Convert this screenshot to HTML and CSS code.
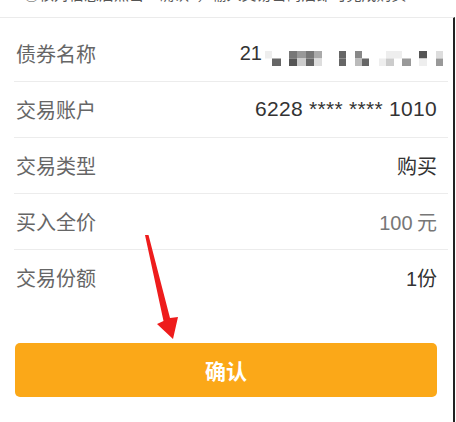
FILE: index.html
```html
<!DOCTYPE html>
<html lang="zh-CN">
<head>
<meta charset="utf-8">
<title>确认交易</title>
<link rel="stylesheet" href="styles.css">
</head>
<body>
<div class="caption">③核对信息后点击“确认”，输入交易密码后即可完成购买</div>
<div class="screen">
  <div class="list">
    <div class="row">
      <span class="label">债券名称</span>
      <span class="value name"><span class="num">21</span><svg class="mosaic" width="178" height="15" viewBox="0 0 178 15">
        <rect x="0" y="0" width="7" height="7.5" fill="#eeeeee"/>
        <rect x="24" y="0" width="8" height="7.5" fill="#777"/>
        <rect x="32" y="0" width="9" height="7.5" fill="#999"/>
        <rect x="41" y="0" width="8" height="7.5" fill="#777"/>
        <rect x="49" y="0" width="8" height="7.5" fill="#aaa"/>
        <rect x="74" y="0" width="7" height="7.5" fill="#666"/>
        <rect x="90" y="0" width="7" height="7.5" fill="#888"/>
        <rect x="121" y="0" width="16" height="7.5" fill="#eee"/>
        <rect x="154" y="0" width="8" height="7.5" fill="#555"/>
        <rect x="171" y="0" width="7" height="7.5" fill="#ddd"/>
        <rect x="7" y="7.5" width="9" height="7.5" fill="#666"/>
        <rect x="24" y="7.5" width="8" height="7.5" fill="#555"/>
        <rect x="32" y="7.5" width="9" height="7.5" fill="#ccc"/>
        <rect x="41" y="7.5" width="8" height="7.5" fill="#666"/>
        <rect x="49" y="7.5" width="8" height="7.5" fill="#ddd"/>
        <rect x="74" y="7.5" width="7" height="7.5" fill="#666"/>
        <rect x="90" y="7.5" width="7" height="7.5" fill="#bbb"/>
        <rect x="97" y="7.5" width="7" height="7.5" fill="#666"/>
        <rect x="114" y="7.5" width="7" height="7.5" fill="#eee"/>
        <rect x="121" y="7.5" width="8" height="7.5" fill="#ccc"/>
        <rect x="137" y="7.5" width="9" height="7.5" fill="#999"/>
        <rect x="154" y="7.5" width="8" height="7.5" fill="#eee"/>
        <rect x="171" y="7.5" width="7" height="7.5" fill="#999"/>
      </svg></span>
    </div>
    <div class="row">
      <span class="label">交易账户</span>
      <span class="value num wide">6228 **** **** 1010</span>
    </div>
    <div class="row">
      <span class="label">交易类型</span>
      <span class="value">购买</span>
    </div>
    <div class="row">
      <span class="label">买入全价</span>
      <span class="value light"><span class="num">100</span> 元</span>
    </div>
    <div class="row last">
      <span class="label">交易份额</span>
      <span class="value"><span class="num">1</span>份</span>
    </div>
  </div>
  <button class="confirm">确认</button>
  <svg class="arrow" width="456" height="422" viewBox="0 0 456 422">
    <polygon points="145,234 148.5,234 170,317 178,316 173,338 157,323 163.5,320" fill="#ee1c1c"/>
  </svg>
</div>
</body>
</html>
```
FILE: styles.css
```css
html, body {
  margin: 0;
  padding: 0;
  background: #ffffff;
}
body {
  width: 456px;
  height: 422px;
  overflow: hidden;
  font-family: "Noto Sans CJK SC", "Liberation Sans", sans-serif;
}
.caption {
  box-sizing: border-box;
  height: 31px;
  margin-top: -14px;
  padding-left: 24px;
  font-size: 15px;
  line-height: 15px;
  color: #555;
  white-space: nowrap;
  overflow: hidden;
}
.screen {
  position: relative;
  width: 455px;
  height: 405px;
  box-sizing: border-box;
  border-top: 1px solid #ebebeb;
  border-right: 2px solid #222;
}
.list {
  margin: 8px 5px 0 14px;
}
.row {
  display: flex;
  align-items: center;
  justify-content: space-between;
  box-sizing: border-box;
  height: 56px;
  padding: 0 11px 1px 2px;
  border-bottom: 1px solid #ececec;
  font-size: 20px;
}
.row.last {
  border-bottom: none;
}
.label {
  color: #666;
}
.value {
  color: #333;
  white-space: nowrap;
}
.value.light {
  color: #777;
}
.num {
  font-family: "Liberation Sans", sans-serif;
}
.wide {
  font-size: 21px;
  letter-spacing: 0.3px;
}
.value.name {
  display: flex;
  align-items: center;
  margin-right: -6px;
}
.name .num {
  margin-right: 3px;
}
.mosaic {
  display: block;
  margin-top: 10px;
}
.confirm {
  display: block;
  margin: 37px 0 0 15px;
  width: 422px;
  height: 54px;
  border: none;
  border-radius: 5px;
  background: #fba818;
  color: #fff;
  font-family: "Noto Sans CJK SC", sans-serif;
  font-size: 21px;
  font-weight: 700;
}
.arrow {
  position: absolute;
  left: 0;
  top: -17px;
  pointer-events: none;
}
```
